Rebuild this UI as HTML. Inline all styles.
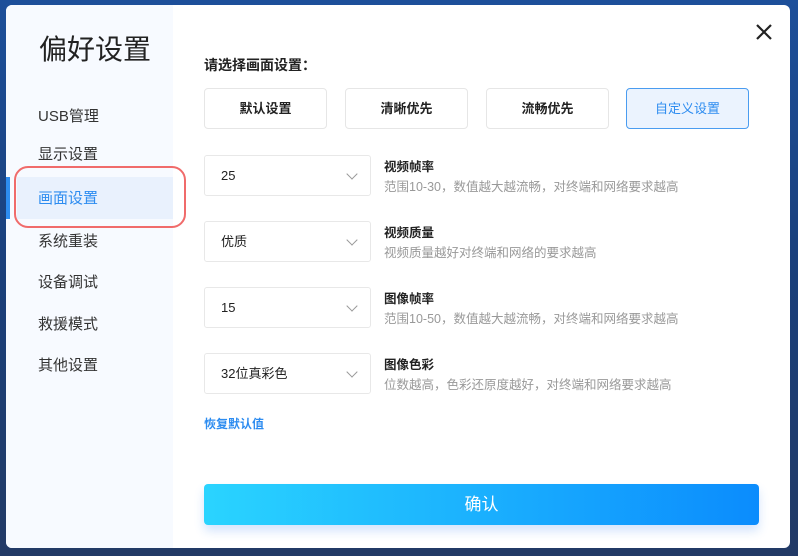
<!DOCTYPE html>
<html><head><meta charset="utf-8"><style>
*{margin:0;padding:0;box-sizing:border-box}
body{width:798px;height:556px;overflow:hidden;background:linear-gradient(180deg,#1d4f9a,#1a3f7a 50%,#223a66);font-family:"Liberation Sans","Noto Sans CJK SC",sans-serif;position:relative}
.win{position:absolute;left:6px;top:5px;width:784px;height:543px;background:#fff;border-radius:6px;overflow:hidden}
.side{position:absolute;left:0;top:0;width:167px;height:100%;background:#f7faff}
.title{position:absolute;left:33px;top:23px;font-size:28px;color:#222}
.nav{position:absolute;left:32px;font-size:15px;color:#333}
.act{position:absolute;left:11px;top:172px;width:156px;height:42px;background:#e9f1fd}
.bar{position:absolute;left:0;top:172px;width:4px;height:42px;background:#2d8cf0}
.ring{position:absolute;left:8px;top:161px;width:172px;height:62px;border:2px solid #f06b6b;border-radius:14px}
.a{position:absolute}
.btn{position:absolute;top:83px;width:123px;height:41px;border:1px solid #e6e6e6;border-radius:4px;font-size:13px;font-weight:bold;color:#222;text-align:center;line-height:39px}
.sel{position:absolute;left:198px;width:167px;height:41px;border:1px solid #e8e8e8;border-radius:3px;font-size:13px;color:#222;padding-left:16px;line-height:39px}
.sel:after{content:"";position:absolute;right:14px;top:14px;width:7px;height:7px;border-right:1px solid #999;border-bottom:1px solid #999;transform:rotate(45deg)}
.lab{position:absolute;left:378px;font-size:12.5px;font-weight:bold;color:#222}
.desc{position:absolute;left:378px;font-size:12.5px;color:#999}
</style></head><body>
<div class="win">
<div class="side"></div>
<div class="title">偏好设置</div>
<div class="act"></div><div class="bar"></div>
<div class="nav" style="top:100px">USB管理</div>
<div class="nav" style="top:138px">显示设置</div>
<div class="nav" style="top:182px;color:#2d8cf0">画面设置</div>
<div class="nav" style="top:225px">系统重装</div>
<div class="nav" style="top:266px">设备调试</div>
<div class="nav" style="top:308px">救援模式</div>
<div class="nav" style="top:349px">其他设置</div>
<div class="ring"></div>
<svg class="a" style="left:748px;top:17px" width="20" height="20"><path d="M3 3L17 17M17 3L3 17" stroke="#222" stroke-width="2.2"/></svg>
<div class="a" style="left:198px;top:50px;font-size:14px;font-weight:bold;color:#222">请选择画面设置：</div>
<div class="btn" style="left:198px">默认设置</div>
<div class="btn" style="left:339px">清晰优先</div>
<div class="btn" style="left:480px">流畅优先</div>
<div class="btn" style="left:620px;background:#ebf3fe;border-color:#4a9cf0;color:#2d8cf0;font-weight:normal">自定义设置</div>
<div class="sel" style="top:150px">25</div>
<div class="lab" style="top:151px">视频帧率</div><div class="desc" style="top:171px">范围10-30，数值越大越流畅，对终端和网络要求越高</div>
<div class="sel" style="top:216px">优质</div>
<div class="lab" style="top:217px">视频质量</div><div class="desc" style="top:237px">视频质量越好对终端和网络的要求越高</div>
<div class="sel" style="top:282px">15</div>
<div class="lab" style="top:283px">图像帧率</div><div class="desc" style="top:303px">范围10-50，数值越大越流畅，对终端和网络要求越高</div>
<div class="sel" style="top:348px">32位真彩色</div>
<div class="lab" style="top:349px">图像色彩</div><div class="desc" style="top:369px">位数越高，色彩还原度越好，对终端和网络要求越高</div>
<div class="a" style="left:198px;top:410px;font-size:12px;font-weight:bold;color:#2d8cf0">恢复默认值</div>
<div class="a" style="left:198px;top:479px;width:555px;height:41px;border-radius:4px;background:linear-gradient(90deg,#2ad4ff,#0b8cfd);box-shadow:0 6px 10px rgba(40,120,240,.2);color:#fff;font-size:17px;text-align:center;line-height:41px">确认</div>
</div>
</body></html>
